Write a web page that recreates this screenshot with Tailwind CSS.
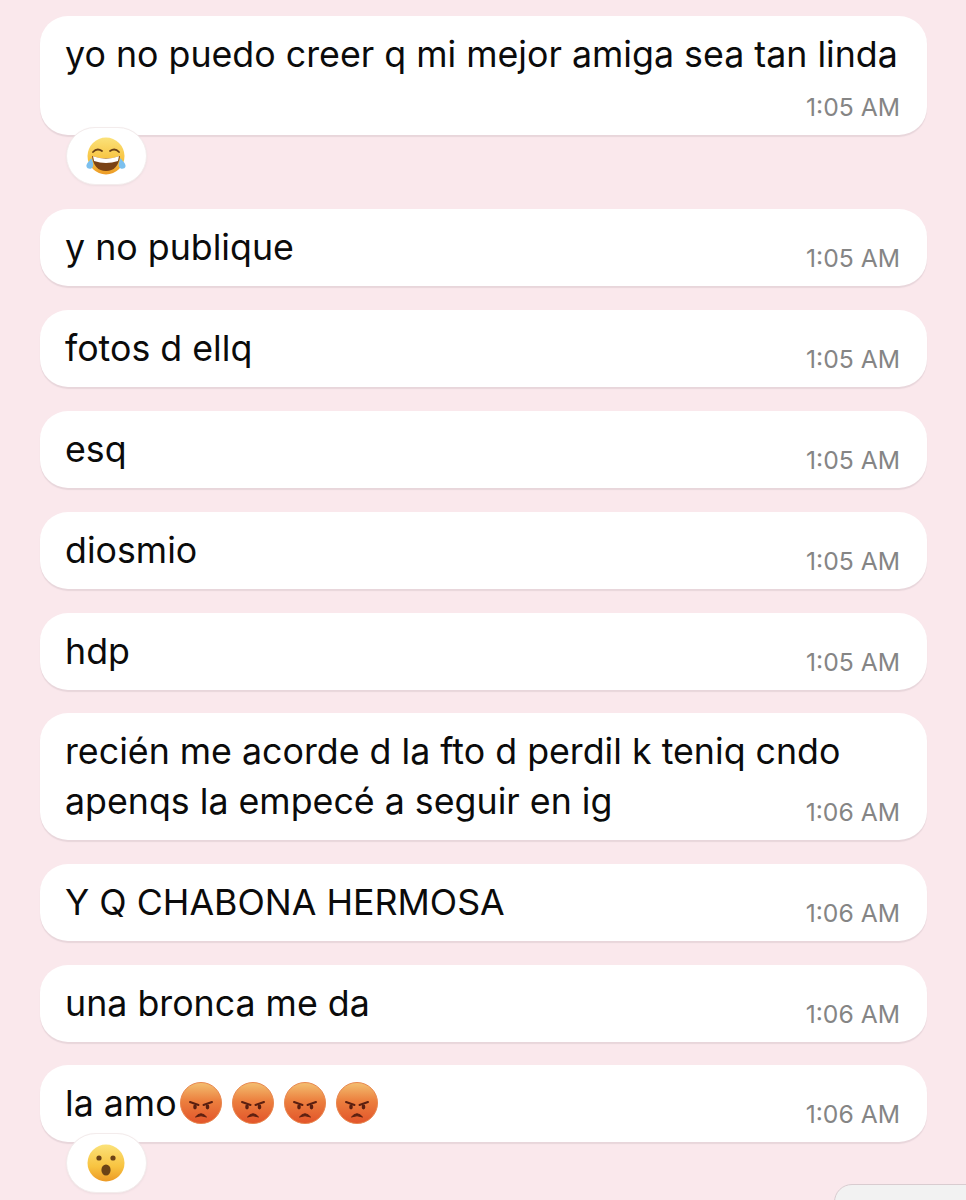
<!DOCTYPE html>
<html lang="es">
<head>
<meta charset="utf-8">
<script src="https://cdn.jsdelivr.net/npm/@tailwindcss/browser@4"></script>
</head>
<body class="m-0 bg-[#fae8ec]">
<svg class="absolute w-0 h-0" aria-hidden="true">
  <defs>
    <linearGradient id="ang" x1="0" y1="0" x2="0" y2="1">
      <stop offset="0" stop-color="#f3c071"/><stop offset=".45" stop-color="#ec7f3e"/><stop offset="1" stop-color="#e2542a"/>
    </linearGradient>
    <linearGradient id="yel" x1="0" y1="0" x2="0" y2="1">
      <stop offset="0" stop-color="#fbe27a"/><stop offset=".6" stop-color="#f8c340"/><stop offset="1" stop-color="#ec9a26"/>
    </linearGradient>
    <symbol id="angry" viewBox="0 0 42 42">
      <circle cx="21" cy="21" r="20.5" fill="url(#ang)" stroke="#e8864e" stroke-width="1"/>
      <path d="M10 20 L18.5 23 M32 20 L23.5 23" stroke="#5a1f10" stroke-width="2" stroke-linecap="round"/>
      <ellipse cx="15" cy="25" rx="1.8" ry="2.4" fill="#5a1f10"/>
      <ellipse cx="27.5" cy="25" rx="1.8" ry="2.4" fill="#5a1f10"/>
      <path d="M15.5 35 Q21 28.5 26.5 35 Q21 32.5 15.5 35 Z" fill="#5a1f10" stroke="#5a1f10" stroke-width="1" stroke-linejoin="round"/>
    </symbol>
    <symbol id="wow" viewBox="0 0 38 38">
      <circle cx="19" cy="19" r="18.5" fill="url(#yel)"/>
      <circle cx="12" cy="14" r="2.6" fill="#6b4216"/>
      <circle cx="26" cy="14" r="2.6" fill="#6b4216"/>
      <ellipse cx="19" cy="26" rx="4.6" ry="5.6" fill="#6b4216"/>
    </symbol>
    <symbol id="laugh" viewBox="0 0 40 38">
      <circle cx="20" cy="19" r="18.5" fill="url(#yel)"/>
      <path d="M7 15 Q11 10.5 16 14 M24 14 Q29 10.5 33 15" fill="none" stroke="#6b4216" stroke-width="1.8" stroke-linecap="round"/>
      <path d="M6 19 Q20 24 34 19 Q32 34 20 34 Q8 34 6 19 Z" fill="#7a4214"/>
      <path d="M7 19.3 Q20 24 33 19.3 L32 24 Q20 28 8 24 Z" fill="#fff"/>
      <path d="M5.5 21 C2.5 25 0 27 0.5 29.5 C1 32 5 32.5 6.5 30.5 C8 28.5 7 25 5.5 21 Z" fill="#7cc0ee"/>
      <path d="M34.5 21 C37.5 25 40 27 39.5 29.5 C39 32 35 32.5 33.5 30.5 C32 28.5 33 25 34.5 21 Z" fill="#7cc0ee"/>
    </symbol>
  </defs>
</svg>

<main class="relative w-[966px] h-[1200px] overflow-hidden font-['Inter','Liberation_Sans',sans-serif] text-[#0b0b0b]">
  <div class="flex flex-col pt-[16px] pl-[40px] pr-[39px]">

    <article class="relative mb-[74px] flex flex-col rounded-[28px] bg-white pt-[13px] pb-[14px] pl-[25px] pr-[27px] shadow-[0_2px_1px_#e8d6db]">
      <p class="text-[35.75px] leading-[50px] whitespace-nowrap">yo no puedo creer q mi mejor amiga sea tan linda</p>
      <time class="mt-[13px] -mb-px self-end text-[24.7px] leading-[30px] whitespace-nowrap text-[#858585]">1:05 AM</time>
      <div class="absolute left-[26px] top-[111px] flex h-[58px] w-[81px] items-center justify-center rounded-full bg-white border border-[#f3ecec] pr-[2px] shadow-[0_1px_2px_#eeddE1]">
        <svg class="h-[38px] w-[40px]"><use href="#laugh"/></svg>
      </div>
    </article>

    <article class="mb-[24px] flex items-end justify-between rounded-[28px] bg-white pt-[13px] pb-[14px] pl-[25px] pr-[27px] shadow-[0_2px_1px_#e8d6db]">
      <p class="text-[35.75px] leading-[50px]">y no publique</p>
      <time class="-mb-px text-[24.7px] leading-[30px] whitespace-nowrap text-[#858585]">1:05 AM</time>
    </article>

    <article class="mb-[24px] flex items-end justify-between rounded-[28px] bg-white pt-[13px] pb-[14px] pl-[25px] pr-[27px] shadow-[0_2px_1px_#e8d6db]">
      <p class="text-[35.75px] leading-[50px]">fotos d ellq</p>
      <time class="-mb-px text-[24.7px] leading-[30px] whitespace-nowrap text-[#858585]">1:05 AM</time>
    </article>

    <article class="mb-[24px] flex items-end justify-between rounded-[28px] bg-white pt-[13px] pb-[14px] pl-[25px] pr-[27px] shadow-[0_2px_1px_#e8d6db]">
      <p class="text-[35.75px] leading-[50px]">esq</p>
      <time class="-mb-px text-[24.7px] leading-[30px] whitespace-nowrap text-[#858585]">1:05 AM</time>
    </article>

    <article class="mb-[24px] flex items-end justify-between rounded-[28px] bg-white pt-[13px] pb-[14px] pl-[25px] pr-[27px] shadow-[0_2px_1px_#e8d6db]">
      <p class="text-[35.75px] leading-[50px]">diosmio</p>
      <time class="-mb-px text-[24.7px] leading-[30px] whitespace-nowrap text-[#858585]">1:05 AM</time>
    </article>

    <article class="mb-[23px] flex items-end justify-between rounded-[28px] bg-white pt-[13px] pb-[14px] pl-[25px] pr-[27px] shadow-[0_2px_1px_#e8d6db]">
      <p class="text-[35.75px] leading-[50px]">hdp</p>
      <time class="-mb-px text-[24.7px] leading-[30px] whitespace-nowrap text-[#858585]">1:05 AM</time>
    </article>

    <article class="mb-[24px] flex items-end justify-between rounded-[28px] bg-white pt-[13px] pb-[14px] pl-[25px] pr-[27px] shadow-[0_2px_1px_#e8d6db]">
      <p class="-mr-[100px] text-[35.75px] leading-[50px] whitespace-nowrap">recién me acorde d la fto d perdil k teniq cndo<br>apenqs la empecé a seguir en ig</p>
      <time class="-mb-px shrink-0 text-[24.7px] leading-[30px] whitespace-nowrap text-[#858585]">1:06 AM</time>
    </article>

    <article class="mb-[24px] flex items-end justify-between rounded-[28px] bg-white pt-[13px] pb-[14px] pl-[25px] pr-[27px] shadow-[0_2px_1px_#e8d6db]">
      <p class="text-[35.75px] leading-[50px]">Y Q CHABONA HERMOSA</p>
      <time class="-mb-px text-[24.7px] leading-[30px] whitespace-nowrap text-[#858585]">1:06 AM</time>
    </article>

    <article class="mb-[23px] flex items-end justify-between rounded-[28px] bg-white pt-[13px] pb-[14px] pl-[25px] pr-[27px] shadow-[0_2px_1px_#e8d6db]">
      <p class="text-[35.75px] leading-[50px]">una bronca me da</p>
      <time class="-mb-px text-[24.7px] leading-[30px] whitespace-nowrap text-[#858585]">1:06 AM</time>
    </article>

    <article class="relative flex items-end justify-between rounded-[28px] bg-white pt-[13px] pb-[14px] pl-[25px] pr-[27px] shadow-[0_2px_1px_#e8d6db]">
      <div class="flex items-center h-[50px]">
        <p class="text-[35.75px] leading-[50px]">la amo</p>
        <div class="flex gap-[10px] ml-[3px]">
          <svg class="h-[42px] w-[42px]"><use href="#angry"/></svg>
          <svg class="h-[42px] w-[42px]"><use href="#angry"/></svg>
          <svg class="h-[42px] w-[42px]"><use href="#angry"/></svg>
          <svg class="h-[42px] w-[42px]"><use href="#angry"/></svg>
        </div>
      </div>
      <time class="-mb-px text-[24.7px] leading-[30px] whitespace-nowrap text-[#858585]">1:06 AM</time>
      <div class="absolute left-[26px] top-[68px] flex h-[60px] w-[81px] items-center justify-center rounded-full bg-white border border-[#f3ecec] pr-[2px] shadow-[0_1px_2px_#eeddE1]">
        <svg class="h-[38px] w-[38px]"><use href="#wow"/></svg>
      </div>
    </article>
  </div>

  <div class="absolute left-[834px] top-[1184px] h-[60px] w-[200px] rounded-[18px] border border-[#d9ccd0] bg-[#f2f2f2]"></div>
</main>
</body>
</html>
